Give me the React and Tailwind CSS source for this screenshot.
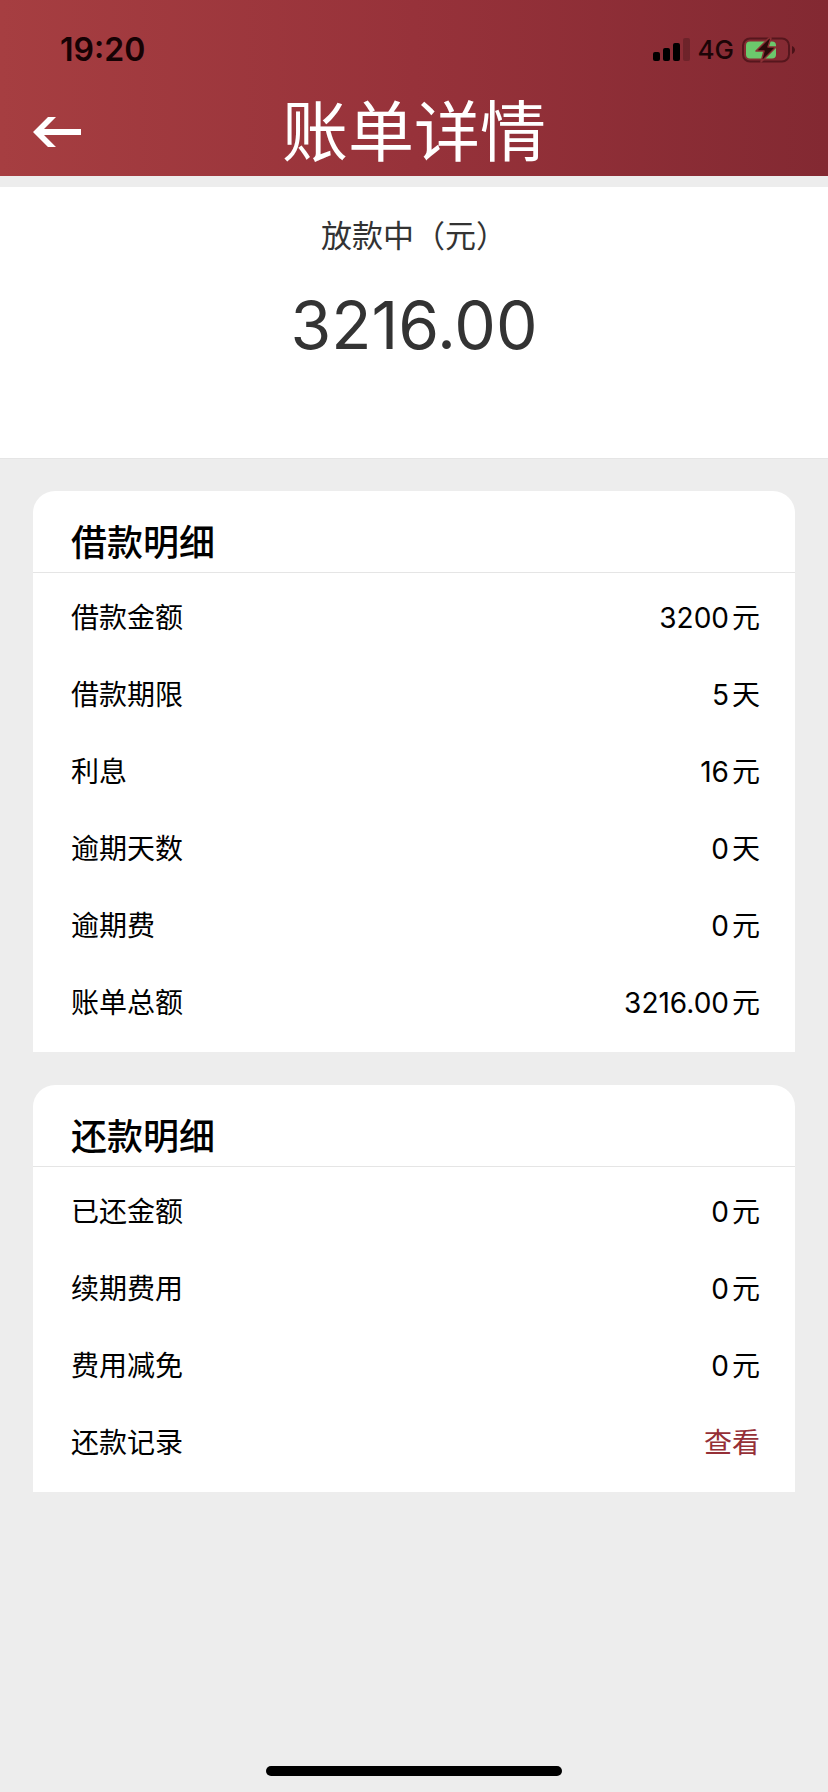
const loanRows = [
  { label: "借款金额", value: "3200", unit: "元" },
  { label: "借款期限", value: "5", unit: "天" },
  { label: "利息", value: "16", unit: "元" },
  { label: "逾期天数", value: "0", unit: "天" },
  { label: "逾期费", value: "0", unit: "元" },
  { label: "账单总额", value: "3216.00", unit: "元" },
];

const repayRows = [
  { label: "已还金额", value: "0", unit: "元" },
  { label: "续期费用", value: "0", unit: "元" },
  { label: "费用减免", value: "0", unit: "元" },
  { label: "还款记录", link: "查看" },
];

function SignalIcon() {
  return (
    <svg width="37" height="24" viewBox="0 0 37 24">
      <rect x="0" y="14" width="7" height="9" rx="2" />
      <rect x="10" y="10" width="7" height="13" rx="2" />
      <rect x="20" y="5" width="7" height="18" rx="2" />
      <rect x="30" y="0" width="7" height="23" rx="2" fillOpacity="0.2" />
    </svg>
  );
}

function BatteryIcon() {
  return (
    <svg width="54" height="26" viewBox="0 0 54 26">
      <rect x="1" y="1.5" width="46" height="23" rx="7" fill="none" stroke="#4a1218" strokeOpacity="0.8" strokeWidth="2" />
      <path d="M50 9c4 2 4 6 0 8z" fill="#4a1218" />
      <rect x="4" y="4.5" width="30" height="17" rx="4" fill="#6cc96c" />
      <path
        d="M27 1L14 14h8l-3 11 15-15h-8l3-9z"
        fill="#2a0a0a"
        stroke="#8a2f34"
        strokeWidth="1.5"
        strokeLinejoin="round"
      />
    </svg>
  );
}

function StatusBar() {
  return (
    <div className="flex justify-between items-center h-[100px] pl-[60px] pr-8">
      <span className="text-[32px] leading-10 font-semibold text-[#160204]">19:20</span>
      <div className="flex items-center">
        <SignalIcon />
        <span className="ml-2 mr-2 text-[26px] leading-8 font-medium text-[#1c0507]">4G</span>
        <BatteryIcon />
      </div>
    </div>
  );
}

function Card({ title, rows }) {
  return (
    <section className="bg-white rounded-t-[22px] pb-[11px]">
      <h2 className="h-[82px] pt-[26px] px-[38px] border-b border-[#e5e5e5] text-[36px] leading-[52px] font-medium">
        {title}
      </h2>
      <dl className="pt-[6px] pl-[38px] pr-[35px]">
        {rows.map((row) => (
          <div key={row.label} className="flex justify-between items-center h-[77px] text-[28px] leading-10">
            <dt>{row.label}</dt>
            <dd className="flex gap-[3px]">
              {row.link ? (
                <a href="#records" className="text-[#952f36]">{row.link}</a>
              ) : (
                <>
                  <span>{row.value}</span>
                  <span>{row.unit}</span>
                </>
              )}
            </dd>
          </div>
        ))}
      </dl>
    </section>
  );
}

export default function App() {
  return (
    <div className="flex flex-col min-h-screen bg-[#ededed] text-black font-[Inter,'Noto_Sans_CJK_SC',sans-serif]">
      <header className="bg-linear-to-r from-[#a63e41] via-[#97323a] to-[#832932]">
        <StatusBar />
        <div className="grid grid-cols-[1fr_auto_1fr] items-center h-[76px] px-[33px] pb-3 text-white">
          <button type="button" aria-label="返回" className="justify-self-start">
            <svg width="48" height="30" viewBox="0 0 48 30" fill="currentColor">
              <path d="M0 15L15 0h8L11 12h37v6H11l12 12h-8z" />
            </svg>
          </button>
          <h1 className="text-[66px] leading-[64px] font-normal">账单详情</h1>
        </div>
      </header>

      <section className="mt-[11px] h-[272px] pt-7 bg-white border-b border-[#e5e5e5] text-center text-[#333]">
        <p className="text-[31px] leading-[42px]">放款中（元）</p>
        <p className="mt-[26px] text-[66px] leading-[84px]">3216.00</p>
      </section>

      <main className="flex flex-col gap-[33px] px-[33px] pt-8">
        <Card title="借款明细" rows={loanRows} />
        <Card title="还款明细" rows={repayRows} />
      </main>

      <div className="mt-auto mb-4 mx-auto w-[296px] h-[10px] rounded-full bg-black" />
    </div>
  );
}
